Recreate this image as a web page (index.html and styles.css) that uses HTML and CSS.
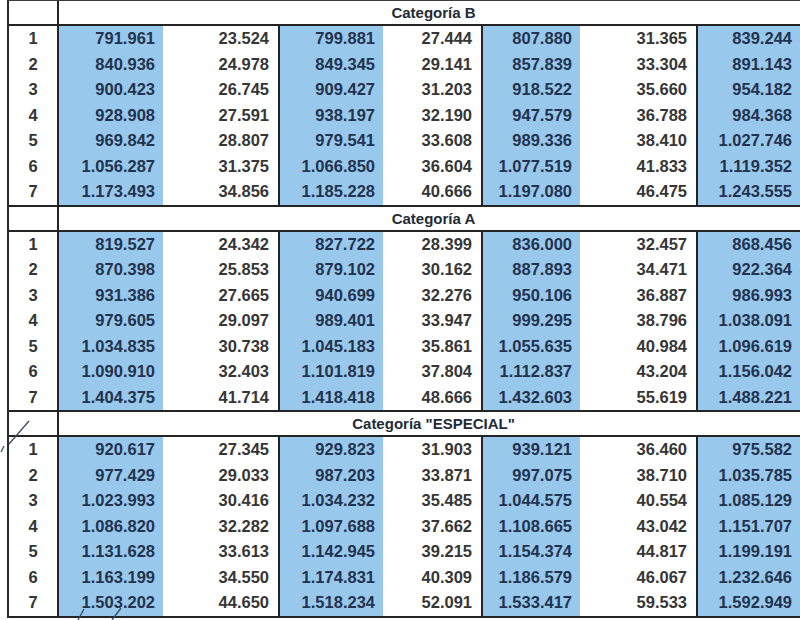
FILE: index.html
```html
<!DOCTYPE html>
<html lang="es">
<head>
<meta charset="utf-8">
<title>Categorías</title>
<link rel="stylesheet" href="styles.css">
</head>
<body>
<div class="sheet">
  <section class="block">
    <div class="idx head"></div>
    <div class="title">Categoría B</div>
    <div class="idx">1</div><div class="c b">791.961</div><div class="c w sep">23.524</div><div class="c b">799.881</div><div class="c w sep">27.444</div><div class="c b">807.880</div><div class="c w sep">31.365</div><div class="c b">839.244</div>
    <div class="idx">2</div><div class="c b">840.936</div><div class="c w sep">24.978</div><div class="c b">849.345</div><div class="c w sep">29.141</div><div class="c b">857.839</div><div class="c w sep">33.304</div><div class="c b">891.143</div>
    <div class="idx">3</div><div class="c b">900.423</div><div class="c w sep">26.745</div><div class="c b">909.427</div><div class="c w sep">31.203</div><div class="c b">918.522</div><div class="c w sep">35.660</div><div class="c b">954.182</div>
    <div class="idx">4</div><div class="c b">928.908</div><div class="c w sep">27.591</div><div class="c b">938.197</div><div class="c w sep">32.190</div><div class="c b">947.579</div><div class="c w sep">36.788</div><div class="c b">984.368</div>
    <div class="idx">5</div><div class="c b">969.842</div><div class="c w sep">28.807</div><div class="c b">979.541</div><div class="c w sep">33.608</div><div class="c b">989.336</div><div class="c w sep">38.410</div><div class="c b">1.027.746</div>
    <div class="idx">6</div><div class="c b">1.056.287</div><div class="c w sep">31.375</div><div class="c b">1.066.850</div><div class="c w sep">36.604</div><div class="c b">1.077.519</div><div class="c w sep">41.833</div><div class="c b">1.119.352</div>
    <div class="idx">7</div><div class="c b">1.173.493</div><div class="c w sep">34.856</div><div class="c b">1.185.228</div><div class="c w sep">40.666</div><div class="c b">1.197.080</div><div class="c w sep">46.475</div><div class="c b">1.243.555</div>
  </section>
  <section class="block">
    <div class="idx head"></div>
    <div class="title">Categoría A</div>
    <div class="idx">1</div><div class="c b">819.527</div><div class="c w sep">24.342</div><div class="c b">827.722</div><div class="c w sep">28.399</div><div class="c b">836.000</div><div class="c w sep">32.457</div><div class="c b">868.456</div>
    <div class="idx">2</div><div class="c b">870.398</div><div class="c w sep">25.853</div><div class="c b">879.102</div><div class="c w sep">30.162</div><div class="c b">887.893</div><div class="c w sep">34.471</div><div class="c b">922.364</div>
    <div class="idx">3</div><div class="c b">931.386</div><div class="c w sep">27.665</div><div class="c b">940.699</div><div class="c w sep">32.276</div><div class="c b">950.106</div><div class="c w sep">36.887</div><div class="c b">986.993</div>
    <div class="idx">4</div><div class="c b">979.605</div><div class="c w sep">29.097</div><div class="c b">989.401</div><div class="c w sep">33.947</div><div class="c b">999.295</div><div class="c w sep">38.796</div><div class="c b">1.038.091</div>
    <div class="idx">5</div><div class="c b">1.034.835</div><div class="c w sep">30.738</div><div class="c b">1.045.183</div><div class="c w sep">35.861</div><div class="c b">1.055.635</div><div class="c w sep">40.984</div><div class="c b">1.096.619</div>
    <div class="idx">6</div><div class="c b">1.090.910</div><div class="c w sep">32.403</div><div class="c b">1.101.819</div><div class="c w sep">37.804</div><div class="c b">1.112.837</div><div class="c w sep">43.204</div><div class="c b">1.156.042</div>
    <div class="idx">7</div><div class="c b">1.404.375</div><div class="c w sep">41.714</div><div class="c b">1.418.418</div><div class="c w sep">48.666</div><div class="c b">1.432.603</div><div class="c w sep">55.619</div><div class="c b">1.488.221</div>
  </section>
  <section class="block">
    <div class="idx head"></div>
    <div class="title">Categoría "ESPECIAL"</div>
    <div class="idx">1</div><div class="c b">920.617</div><div class="c w sep">27.345</div><div class="c b">929.823</div><div class="c w sep">31.903</div><div class="c b">939.121</div><div class="c w sep">36.460</div><div class="c b">975.582</div>
    <div class="idx">2</div><div class="c b">977.429</div><div class="c w sep">29.033</div><div class="c b">987.203</div><div class="c w sep">33.871</div><div class="c b">997.075</div><div class="c w sep">38.710</div><div class="c b">1.035.785</div>
    <div class="idx">3</div><div class="c b">1.023.993</div><div class="c w sep">30.416</div><div class="c b">1.034.232</div><div class="c w sep">35.485</div><div class="c b">1.044.575</div><div class="c w sep">40.554</div><div class="c b">1.085.129</div>
    <div class="idx">4</div><div class="c b">1.086.820</div><div class="c w sep">32.282</div><div class="c b">1.097.688</div><div class="c w sep">37.662</div><div class="c b">1.108.665</div><div class="c w sep">43.042</div><div class="c b">1.151.707</div>
    <div class="idx">5</div><div class="c b">1.131.628</div><div class="c w sep">33.613</div><div class="c b">1.142.945</div><div class="c w sep">39.215</div><div class="c b">1.154.374</div><div class="c w sep">44.817</div><div class="c b">1.199.191</div>
    <div class="idx">6</div><div class="c b">1.163.199</div><div class="c w sep">34.550</div><div class="c b">1.174.831</div><div class="c w sep">40.309</div><div class="c b">1.186.579</div><div class="c w sep">46.067</div><div class="c b">1.232.646</div>
    <div class="idx">7</div><div class="c b">1.503.202</div><div class="c w sep">44.650</div><div class="c b">1.518.234</div><div class="c w sep">52.091</div><div class="c b">1.533.417</div><div class="c w sep">59.533</div><div class="c b">1.592.949</div>
  </section>
  <svg class="pen" width="800" height="620" viewBox="0 0 800 620" aria-hidden="true">
    <path d="M9 444 L29 421" />
    <path d="M1 452 L4 446" />
    <path d="M78 620 L84 609" />
    <path d="M112 620 L121 608" />
  </svg>
</div>
</body>
</html>
```
FILE: styles.css
```css
* { box-sizing: border-box; }
html, body { margin: 0; padding: 0; background: #fff; }
body {
  width: 800px;
  height: 620px;
  overflow: hidden;
  font-family: "Liberation Sans", Arial, sans-serif;
}
.sheet {
  position: relative;
  margin-left: 7px;
  border-left: 2px solid #2a2a2a;
  border-top: 1px solid #3a3a3a;
  width: 793px;
}
.block {
  display: grid;
  grid-template-columns: 50px 104px 117px 103px 100px 97px 118px 102px;
  grid-template-rows: 25px repeat(7, 25.5px);
  border-bottom: 2px solid #242424;
}
.idx {
  border-right: 2px solid #242424;
  display: flex;
  align-items: center;
  justify-content: center;
  font-size: 16.5px;
  font-weight: bold;
  color: #353535;
}
.idx.head {
  border-bottom: 2px solid #242424;
}
.title {
  grid-column: 2 / span 7;
  border-bottom: 2px solid #242424;
  display: flex;
  align-items: center;
  justify-content: center;
  font-size: 15px;
  font-weight: bold;
  color: #222b36;
  padding-left: 8px;
}
.c {
  display: flex;
  align-items: center;
  justify-content: flex-end;
  font-size: 16.5px;
  font-weight: bold;
  padding-right: 8px;
}
.b {
  background: #98c9ec;
  color: #23324e;
}
.w {
  background: #fff;
  color: #363636;
}
.sep {
  border-right: 2px solid #242424;
  padding-right: 9px;
}
.pen {
  position: absolute;
  left: -9px;
  top: -1px;
  pointer-events: none;
}
.pen path {
  stroke: #3a4a66;
  stroke-width: 1.3;
  fill: none;
}
```
